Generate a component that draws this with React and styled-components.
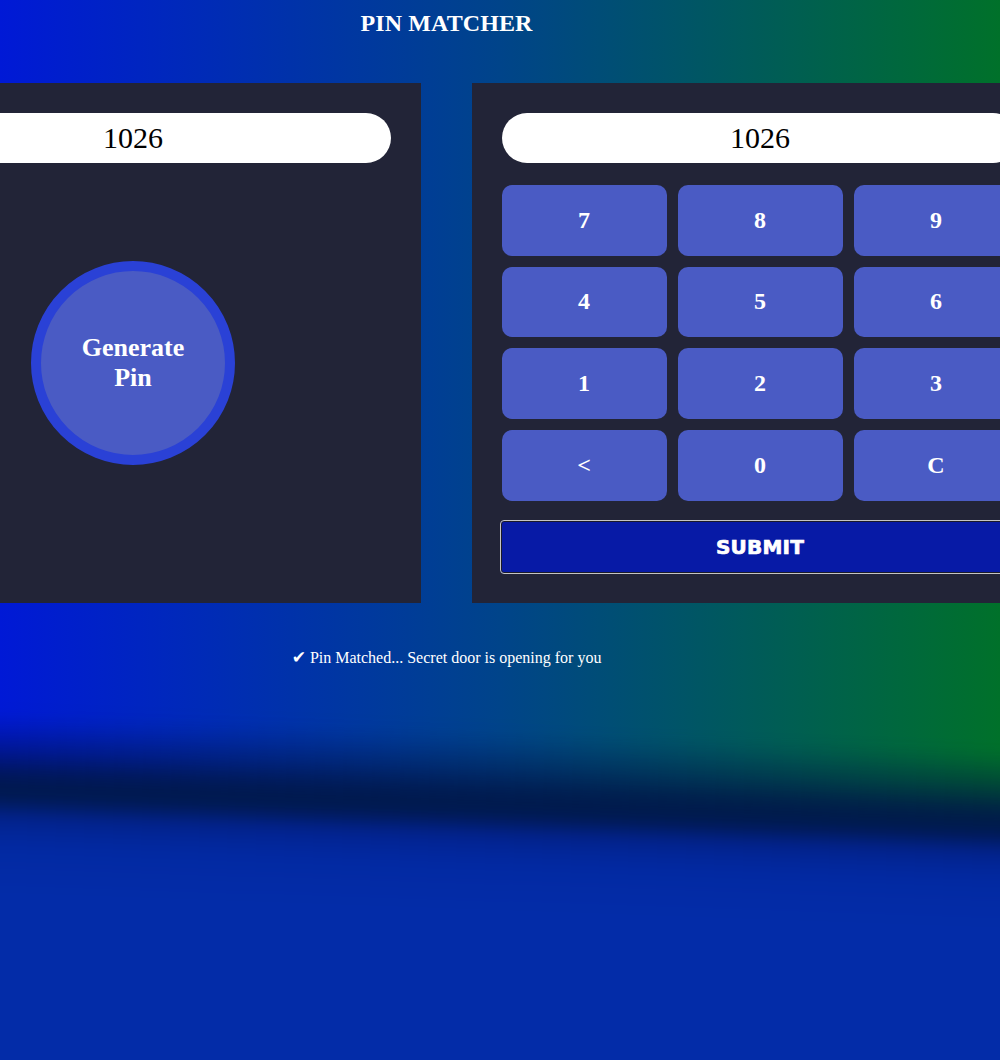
import React from "react";
import styled, { createGlobalStyle } from "styled-components";

const Global = createGlobalStyle`
  html, body { margin: 0; padding: 0; }
  body {
    background: #032ca8;
    font-family: "Liberation Serif", "Times New Roman", serif;
    overflow: hidden;
  }
`;

const Page = styled.div`
  position: relative;
  width: 1000px;
  height: 1060px;
  overflow: hidden;
  background: linear-gradient(to right, #0019d6 0%, #00448a 50%, #00712a 100%);
`;

const Backdrop = styled.div`
  position: absolute;
  left: -100px;
  right: -100px;
  top: 712px;
  height: 500px;
  background: linear-gradient(
    to bottom,
    rgba(0, 20, 90, 0) 0px,
    rgba(0, 18, 70, 0.45) 35px,
    rgba(0, 22, 72, 0.92) 62px,
    #001a4e 78px,
    #00184c 84px,
    #02218a 98px,
    #0229a2 130px,
    #032ca8 180px,
    #032ca8 500px
  );
  transform: rotate(2deg);
  transform-origin: left top;
  filter: blur(9px);
  pointer-events: none;
`;

const Main = styled.div`
  position: relative;
  width: 893px;
  display: flex;
  flex-direction: column;
  align-items: center;
`;

const Title = styled.h1`
  margin: 9px 0 0;
  height: 74px;
  font-size: 24px;
  font-weight: bold;
  color: #ffffff;
  line-height: 28px;
  letter-spacing: 0.1px;
`;

const Row = styled.div`
  display: flex;
  gap: 51px;
  flex-shrink: 0;
`;

const Panel = styled.section`
  width: 576px;
  height: 520px;
  box-sizing: border-box;
  padding: 30px 30px 29px;
  background: #222437;
  display: flex;
  flex-direction: column;
  align-items: center;
`;

const Display = styled.div`
  width: 516px;
  height: 50px;
  flex-shrink: 0;
  border-radius: 25px;
  background: #ffffff;
  color: #000;
  font-size: 30px;
  line-height: 50px;
  text-align: center;
`;

const GenerateButton = styled.button`
  margin-top: 98px;
  width: 204px;
  height: 204px;
  border-radius: 50%;
  border: 10px solid #2a41d6;
  background: #4a5bc4;
  color: #fff;
  font-family: "Liberation Serif", "Times New Roman", serif;
  font-weight: bold;
  font-size: 26px;
  line-height: 30px;
  padding: 0 20px;
  box-sizing: border-box;
`;

const Keypad = styled.div`
  margin-top: 22px;
  width: 517px;
  display: grid;
  grid-template-columns: repeat(3, 1fr);
  grid-auto-rows: 70.67px;
  gap: 11px;
`;

const Key = styled.button`
  border: none;
  border-radius: 10px;
  background: #4a5bc4;
  color: #fff;
  font-family: "Liberation Serif", "Times New Roman", serif;
  font-weight: bold;
  font-size: 24px;
  padding: 0;
`;

const Submit = styled.button`
  margin-top: 19.5px;
  width: 520px;
  height: 54px;
  flex-shrink: 0;
  border: 1px solid #c4c4c4;
  box-shadow: inset 0 0 0 1px #1a1a2a;
  border-radius: 4px;
  background: #071aa6;
  color: #fff;
  font-family: "DejaVu Sans", "Liberation Sans", sans-serif;
  font-weight: bold;
  font-size: 20px;
  letter-spacing: 0.2px;
  -webkit-text-stroke: 0.7px #fff;
`;

const Message = styled.p`
  margin: 45px 0 0;
  color: #fff;
  font-size: 16px;
  line-height: 20px;
`;

const Check = styled.span`
  font-family: "DejaVu Sans", sans-serif;
  font-size: 17px;
  line-height: 16px;
`;

const keys = ["7", "8", "9", "4", "5", "6", "1", "2", "3", "<", "0", "C"];

export default function App() {
  return (
    <>
      <Global />
      <Page>
        <Backdrop />
        <Main>
          <Title>PIN MATCHER</Title>
          <Row>
            <Panel>
              <Display>1026</Display>
              <GenerateButton>Generate Pin</GenerateButton>
            </Panel>
            <Panel>
              <Display>1026</Display>
              <Keypad>
                {keys.map((k) => (
                  <Key key={k}>{k}</Key>
                ))}
              </Keypad>
              <Submit>SUBMIT</Submit>
            </Panel>
          </Row>
          <Message>
            <Check>✔</Check> Pin Matched... Secret door is opening for you
          </Message>
        </Main>
      </Page>
    </>
  );
}
